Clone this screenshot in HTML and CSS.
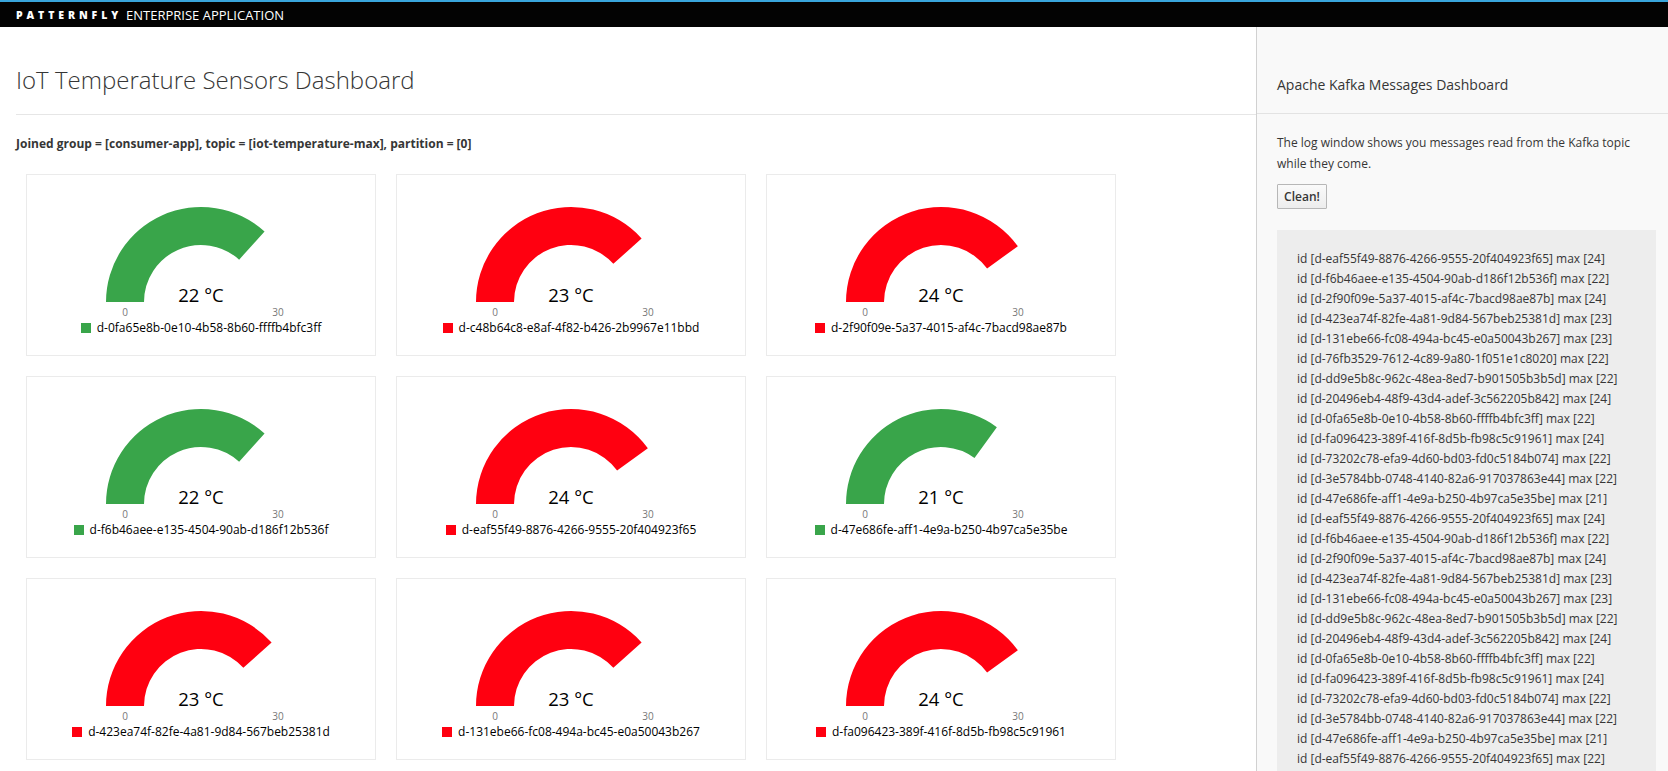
FILE: index.html
```html
<!DOCTYPE html>
<html lang="en">
<head>
<meta charset="utf-8">
<title>IoT Temperature Sensors Dashboard</title>
<link rel="stylesheet" href="styles.css">
</head>
<body>
<header class="navbar">
  <span class="brand-name">PATTERNFLY</span>
  <span class="brand-sub">ENTERPRISE APPLICATION</span>
</header>
<div class="layout">
  <main class="main">
    <h1 class="page-title">IoT Temperature Sensors Dashboard</h1>
    <p class="joined">Joined group = [consumer-app], topic = [iot-temperature-max], partition = [0]</p>
    <div class="cards">
      <div class="card">
        <svg class="gauge" viewBox="0 0 348 145" width="348" height="145">
          <path class="arc-green" d="M79 127 A95 95 0 0 1 237.57 56.40 L212.14 84.64 A57 57 0 0 0 117 127 Z"/>
          <text class="g-value" x="174" y="127">22 °C</text>
          <text class="g-label" x="98" y="141">0</text>
          <text class="g-label" x="251" y="141">30</text>
        </svg>
        <div class="legend"><span class="swatch green"></span><span>d-0fa65e8b-0e10-4b58-8b60-ffffb4bfc3ff</span></div>
      </div>
      <div class="card">
        <svg class="gauge" viewBox="0 0 348 145" width="348" height="145">
          <path class="arc-red" d="M79 127 A95 95 0 0 1 244.60 63.43 L216.36 88.86 A57 57 0 0 0 117 127 Z"/>
          <text class="g-value" x="174" y="127">23 °C</text>
          <text class="g-label" x="98" y="141">0</text>
          <text class="g-label" x="251" y="141">30</text>
        </svg>
        <div class="legend"><span class="swatch red"></span><span>d-c48b64c8-e8af-4f82-b426-2b9967e11bbd</span></div>
      </div>
      <div class="card">
        <svg class="gauge" viewBox="0 0 348 145" width="348" height="145">
          <path class="arc-red" d="M79 127 A95 95 0 0 1 250.86 71.16 L220.11 93.50 A57 57 0 0 0 117 127 Z"/>
          <text class="g-value" x="174" y="127">24 °C</text>
          <text class="g-label" x="98" y="141">0</text>
          <text class="g-label" x="251" y="141">30</text>
        </svg>
        <div class="legend"><span class="swatch red"></span><span>d-2f90f09e-5a37-4015-af4c-7bacd98ae87b</span></div>
      </div>
      <div class="card">
        <svg class="gauge" viewBox="0 0 348 145" width="348" height="145">
          <path class="arc-green" d="M79 127 A95 95 0 0 1 237.57 56.40 L212.14 84.64 A57 57 0 0 0 117 127 Z"/>
          <text class="g-value" x="174" y="127">22 °C</text>
          <text class="g-label" x="98" y="141">0</text>
          <text class="g-label" x="251" y="141">30</text>
        </svg>
        <div class="legend"><span class="swatch green"></span><span>d-f6b46aee-e135-4504-90ab-d186f12b536f</span></div>
      </div>
      <div class="card">
        <svg class="gauge" viewBox="0 0 348 145" width="348" height="145">
          <path class="arc-red" d="M79 127 A95 95 0 0 1 250.86 71.16 L220.11 93.50 A57 57 0 0 0 117 127 Z"/>
          <text class="g-value" x="174" y="127">24 °C</text>
          <text class="g-label" x="98" y="141">0</text>
          <text class="g-label" x="251" y="141">30</text>
        </svg>
        <div class="legend"><span class="swatch red"></span><span>d-eaf55f49-8876-4266-9555-20f404923f65</span></div>
      </div>
      <div class="card">
        <svg class="gauge" viewBox="0 0 348 145" width="348" height="145">
          <path class="arc-green" d="M79 127 A95 95 0 0 1 229.84 50.14 L207.50 80.89 A57 57 0 0 0 117 127 Z"/>
          <text class="g-value" x="174" y="127">21 °C</text>
          <text class="g-label" x="98" y="141">0</text>
          <text class="g-label" x="251" y="141">30</text>
        </svg>
        <div class="legend"><span class="swatch green"></span><span>d-47e686fe-aff1-4e9a-b250-4b97ca5e35be</span></div>
      </div>
      <div class="card">
        <svg class="gauge" viewBox="0 0 348 145" width="348" height="145">
          <path class="arc-red" d="M79 127 A95 95 0 0 1 244.60 63.43 L216.36 88.86 A57 57 0 0 0 117 127 Z"/>
          <text class="g-value" x="174" y="127">23 °C</text>
          <text class="g-label" x="98" y="141">0</text>
          <text class="g-label" x="251" y="141">30</text>
        </svg>
        <div class="legend"><span class="swatch red"></span><span>d-423ea74f-82fe-4a81-9d84-567beb25381d</span></div>
      </div>
      <div class="card">
        <svg class="gauge" viewBox="0 0 348 145" width="348" height="145">
          <path class="arc-red" d="M79 127 A95 95 0 0 1 244.60 63.43 L216.36 88.86 A57 57 0 0 0 117 127 Z"/>
          <text class="g-value" x="174" y="127">23 °C</text>
          <text class="g-label" x="98" y="141">0</text>
          <text class="g-label" x="251" y="141">30</text>
        </svg>
        <div class="legend"><span class="swatch red"></span><span>d-131ebe66-fc08-494a-bc45-e0a50043b267</span></div>
      </div>
      <div class="card">
        <svg class="gauge" viewBox="0 0 348 145" width="348" height="145">
          <path class="arc-red" d="M79 127 A95 95 0 0 1 250.86 71.16 L220.11 93.50 A57 57 0 0 0 117 127 Z"/>
          <text class="g-value" x="174" y="127">24 °C</text>
          <text class="g-label" x="98" y="141">0</text>
          <text class="g-label" x="251" y="141">30</text>
        </svg>
        <div class="legend"><span class="swatch red"></span><span>d-fa096423-389f-416f-8d5b-fb98c5c91961</span></div>
      </div>
    </div>
  </main>
  <aside class="sidebar">
    <h2 class="side-title">Apache Kafka Messages Dashboard</h2>
    <div class="side-body">
      <p class="side-text">The log window shows you messages read from the Kafka topic while they come.</p>
      <button class="btn" type="button">Clean!</button>
      <div class="log">
        <div>id [d-eaf55f49-8876-4266-9555-20f404923f65] max [24]</div>
        <div>id [d-f6b46aee-e135-4504-90ab-d186f12b536f] max [22]</div>
        <div>id [d-2f90f09e-5a37-4015-af4c-7bacd98ae87b] max [24]</div>
        <div>id [d-423ea74f-82fe-4a81-9d84-567beb25381d] max [23]</div>
        <div>id [d-131ebe66-fc08-494a-bc45-e0a50043b267] max [23]</div>
        <div>id [d-76fb3529-7612-4c89-9a80-1f051e1c8020] max [22]</div>
        <div>id [d-dd9e5b8c-962c-48ea-8ed7-b901505b3b5d] max [22]</div>
        <div>id [d-20496eb4-48f9-43d4-adef-3c562205b842] max [24]</div>
        <div>id [d-0fa65e8b-0e10-4b58-8b60-ffffb4bfc3ff] max [22]</div>
        <div>id [d-fa096423-389f-416f-8d5b-fb98c5c91961] max [24]</div>
        <div>id [d-73202c78-efa9-4d60-bd03-fd0c5184b074] max [22]</div>
        <div>id [d-3e5784bb-0748-4140-82a6-917037863e44] max [22]</div>
        <div>id [d-47e686fe-aff1-4e9a-b250-4b97ca5e35be] max [21]</div>
        <div>id [d-eaf55f49-8876-4266-9555-20f404923f65] max [24]</div>
        <div>id [d-f6b46aee-e135-4504-90ab-d186f12b536f] max [22]</div>
        <div>id [d-2f90f09e-5a37-4015-af4c-7bacd98ae87b] max [24]</div>
        <div>id [d-423ea74f-82fe-4a81-9d84-567beb25381d] max [23]</div>
        <div>id [d-131ebe66-fc08-494a-bc45-e0a50043b267] max [23]</div>
        <div>id [d-dd9e5b8c-962c-48ea-8ed7-b901505b3b5d] max [22]</div>
        <div>id [d-20496eb4-48f9-43d4-adef-3c562205b842] max [24]</div>
        <div>id [d-0fa65e8b-0e10-4b58-8b60-ffffb4bfc3ff] max [22]</div>
        <div>id [d-fa096423-389f-416f-8d5b-fb98c5c91961] max [24]</div>
        <div>id [d-73202c78-efa9-4d60-bd03-fd0c5184b074] max [22]</div>
        <div>id [d-3e5784bb-0748-4140-82a6-917037863e44] max [22]</div>
        <div>id [d-47e686fe-aff1-4e9a-b250-4b97ca5e35be] max [21]</div>
        <div>id [d-eaf55f49-8876-4266-9555-20f404923f65] max [22]</div>
      </div>
    </div>
  </aside>
</div>
</body>
</html>
```

FILE: styles.css
```css
html, body {
  margin: 0;
  padding: 0;
  height: 100%;
  overflow: hidden;
}

body {
  font-family: "Open Sans", "Liberation Sans", sans-serif;
  color: #363636;
  background: #ffffff;
  display: flex;
  flex-direction: column;
}

.navbar {
  flex: none;
  height: 25px;
  border-top: 2px solid #39a5dc;
  background: #030303;
  display: flex;
  align-items: center;
  padding-left: 16px;
  color: #ffffff;
}

.brand-name {
  font-size: 10.5px;
  font-weight: 800;
  letter-spacing: 3.9px;
  margin-right: 4px;
}

.brand-sub {
  font-size: 13px;
  font-weight: 400;
}

.layout {
  flex: 1;
  display: flex;
  min-height: 0;
}

.main {
  flex: 1;
  padding-left: 16px;
  min-width: 0;
}

.page-title {
  margin: 0;
  padding: 33px 0 14px;
  font-size: 24px;
  line-height: 40px;
  font-weight: 300;
  color: #363636;
  border-bottom: 1px solid #e6e6e6;
}

.joined {
  margin: 19px 0 0;
  font-size: 12px;
  line-height: 20px;
  font-weight: 700;
  color: #363636;
}

.cards {
  display: grid;
  grid-template-columns: repeat(3, 350px);
  grid-auto-rows: 182px;
  gap: 20px;
  margin: 20px 0 0 10px;
}

.card {
  box-sizing: border-box;
  border: 1px solid #ebebeb;
  background: #ffffff;
  display: flex;
  flex-direction: column;
  align-items: center;
}

.gauge {
  display: block;
}

.arc-green { fill: #39a54a; }
.arc-red { fill: #ff0010; }

.g-value {
  font-family: "Open Sans", "Liberation Sans", sans-serif;
  font-size: 18.5px;
  fill: #000000;
  text-anchor: middle;
}

.g-label {
  font-family: "Open Sans", "Liberation Sans", sans-serif;
  font-size: 10px;
  fill: #777777;
  text-anchor: middle;
}

.legend {
  display: flex;
  align-items: center;
  gap: 6px;
  font-size: 12px;
  line-height: 16px;
  color: #000000;
}

.swatch {
  width: 10px;
  height: 10px;
  display: inline-block;
}

.swatch.green { background: #39a54a; }
.swatch.red { background: #ff0010; }

.sidebar {
  flex: none;
  width: 411px;
  border-left: 1px solid #d1d1d1;
  background: #f9f9f9;
  overflow: hidden;
}

.side-title {
  margin: 0;
  padding: 48px 20px 18px;
  font-size: 14px;
  line-height: 20px;
  font-weight: 400;
  color: #363636;
  border-bottom: 1px solid #e3e3e3;
}

.side-body {
  padding: 0 12px 0 20px;
}

.side-text {
  margin: 18px 0 0;
  font-size: 12px;
  line-height: 21px;
  color: #363636;
}

.btn {
  display: block;
  margin-top: 10px;
  height: 25px;
  width: 50px;
  padding: 0;
  font-family: "Open Sans", "Liberation Sans", sans-serif;
  font-size: 12px;
  font-weight: 600;
  color: #363636;
  background: linear-gradient(#fafafa, #ededed);
  border: 1px solid #b7b7b7;
  border-radius: 1px;
}

.log {
  margin-top: 21px;
  padding: 19px 20px;
  background: #ededed;
  font-size: 12px;
  line-height: 20px;
  color: #363636;
}
```
